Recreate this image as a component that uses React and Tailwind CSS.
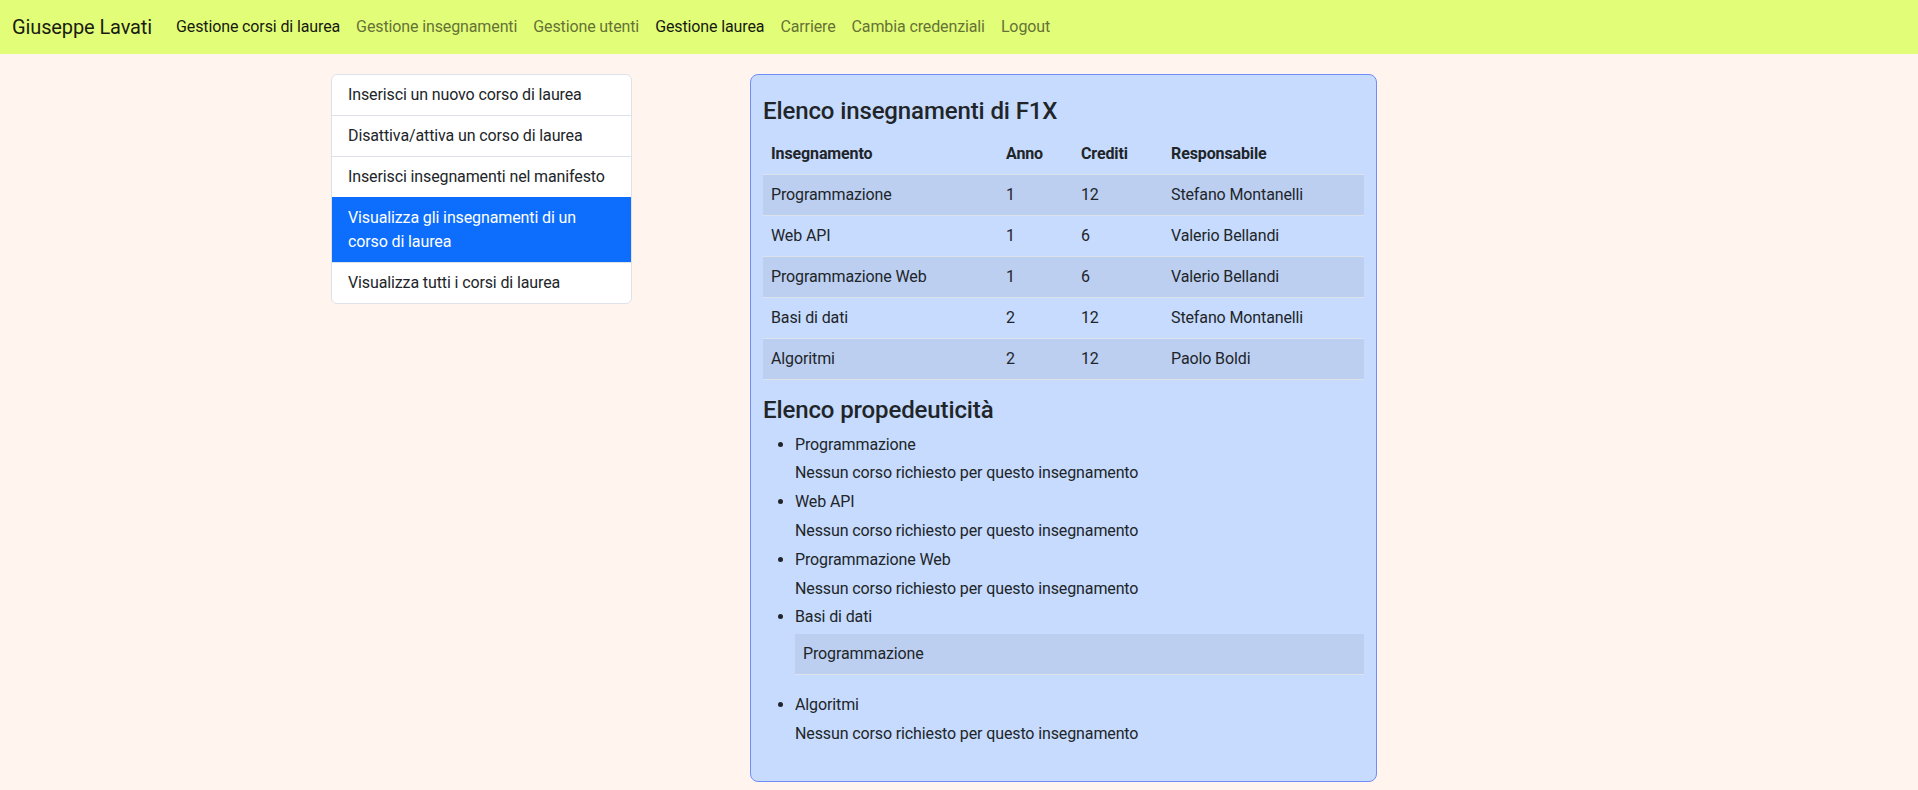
import React from 'react';

const navLinks = [
  { label: 'Gestione corsi di laurea', active: true },
  { label: 'Gestione insegnamenti', active: false },
  { label: 'Gestione utenti', active: false },
  { label: 'Gestione laurea', active: true },
  { label: 'Carriere', active: false },
  { label: 'Cambia credenziali', active: false },
  { label: 'Logout', active: false },
];

const menu = [
  'Inserisci un nuovo corso di laurea',
  'Disattiva/attiva un corso di laurea',
  'Inserisci insegnamenti nel manifesto',
  'Visualizza gli insegnamenti di un corso di laurea',
  'Visualizza tutti i corsi di laurea',
];

const insegnamenti = [
  { nome: 'Programmazione', anno: 1, crediti: 12, resp: 'Stefano Montanelli' },
  { nome: 'Web API', anno: 1, crediti: 6, resp: 'Valerio Bellandi' },
  { nome: 'Programmazione Web', anno: 1, crediti: 6, resp: 'Valerio Bellandi' },
  { nome: 'Basi di dati', anno: 2, crediti: 12, resp: 'Stefano Montanelli' },
  { nome: 'Algoritmi', anno: 2, crediti: 12, resp: 'Paolo Boldi' },
];

const propedeuticita = [
  { nome: 'Programmazione', richiesti: [] },
  { nome: 'Web API', richiesti: [] },
  { nome: 'Programmazione Web', richiesti: [] },
  { nome: 'Basi di dati', richiesti: ['Programmazione'] },
  { nome: 'Algoritmi', richiesti: [] },
];

function Navbar() {
  return (
    <nav className="h-[54px] bg-[#e2fe79] flex items-center px-3">
      <span className="text-[20px] leading-[30px] mr-4 text-[#1a1c12]">Giuseppe Lavati</span>
      <ul className="flex">
        {navLinks.map((l) => (
          <li key={l.label}>
            <a
              href="#"
              className={
                'block px-2 py-2 text-base leading-6 ' +
                (l.active ? 'text-[#171910]' : 'text-[#667235]')
              }
            >
              {l.label}
            </a>
          </li>
        ))}
      </ul>
    </nav>
  );
}

function SideMenu() {
  return (
    <div className="w-[301px] shrink-0 bg-white border border-[#dee2e6] rounded-md overflow-hidden">
      {menu.map((item, i) => (
        <a
          key={item}
          href="#"
          className={
            'block px-4 py-2 leading-6 ' +
            (i > 0 ? 'border-t ' : '') +
            (i === 3
              ? 'bg-[#0d6efd] text-white border-[#0d6efd]'
              : 'text-[#212529] border-[#dee2e6]')
          }
        >
          {item}
        </a>
      ))}
    </div>
  );
}

function Card() {
  return (
    <div className="w-[627px] shrink-0 bg-[#c6dbfd] border border-[#6f8ef9] rounded-lg pt-[22px] px-3 pb-4">
      <h4 className="text-[24px] leading-[28.8px] font-medium mb-2">Elenco insegnamenti di F1X</h4>
      <table className="w-full table-fixed border-collapse mb-4">
        <colgroup>
          <col className="w-[235px]" />
          <col className="w-[75px]" />
          <col className="w-[90px]" />
          <col />
        </colgroup>
        <thead>
          <tr className="border-b border-[#dce3ec]">
            <th className="text-left font-bold px-2 py-2 leading-6">Insegnamento</th>
            <th className="text-left font-bold px-2 py-2 leading-6">Anno</th>
            <th className="text-left font-bold px-2 py-2 leading-6">Crediti</th>
            <th className="text-left font-bold px-2 py-2 leading-6">Responsabile</th>
          </tr>
        </thead>
        <tbody>
          {insegnamenti.map((r, i) => (
            <tr
              key={r.nome}
              className={'border-b border-[#dce3ec] ' + (i % 2 === 0 ? 'bg-[#bccff1]' : '')}
            >
              <td className="px-2 py-2 leading-6">{r.nome}</td>
              <td className="px-2 py-2 leading-6">{r.anno}</td>
              <td className="px-2 py-2 leading-6">{r.crediti}</td>
              <td className="px-2 py-2 leading-6">{r.resp}</td>
            </tr>
          ))}
        </tbody>
      </table>

      <h4 className="text-[24px] leading-[28.8px] font-medium mb-[6px]">Elenco propedeuticità</h4>
      <ul className="list-disc pl-8 mb-4 leading-[28.8px]">
        {propedeuticita.map((p) => (
          <li key={p.nome}>
            {p.nome}
            {p.richiesti.length === 0 ? (
              <div>Nessun corso richiesto per questo insegnamento</div>
            ) : (
              <table className="w-full border-collapse mt-[2px] mb-4">
                <tbody>
                  {p.richiesti.map((c) => (
                    <tr key={c} className="bg-[#bccff1] border-b border-[#dce3ec]">
                      <td className="px-2 py-2 leading-6">{c}</td>
                    </tr>
                  ))}
                </tbody>
              </table>
            )}
          </li>
        ))}
      </ul>
    </div>
  );
}

export default function App() {
  return (
    <div className="min-h-screen bg-[#fff5ee] text-[#212529] tracking-[-0.12px] font-[Roboto,'Liberation_Sans',sans-serif]">
      <Navbar />
      <div className="flex items-start gap-[118px] pl-[331px] pt-5 pb-[10px]">
        <SideMenu />
        <Card />
      </div>
    </div>
  );
}
